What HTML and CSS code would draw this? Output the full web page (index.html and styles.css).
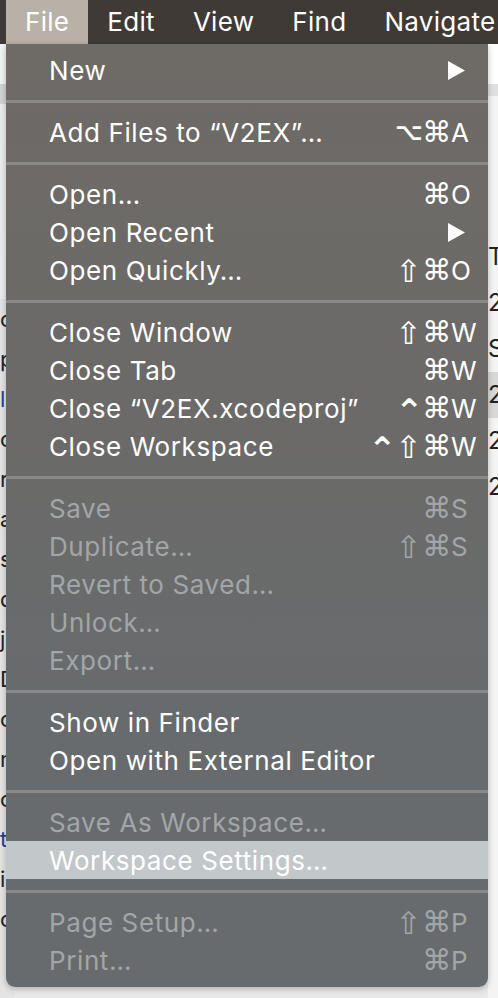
FILE: index.html
```html
<!DOCTYPE html>
<html>
<head>
<meta charset="utf-8">
<link rel="stylesheet" href="styles.css">
</head>
<body>
<div class="screen">
  <div class="menubar">
    <div class="mb-item active">File</div>
    <div class="mb-item">Edit</div>
    <div class="mb-item">View</div>
    <div class="mb-item">Find</div>
    <div class="mb-item">Navigate</div>
  </div>
  <div class="window">
    <div class="win-left">
      <div class="frag f-top"></div>
      <div class="frag">o</div><div class="frag">p</div><div class="frag blue">l</div><div class="frag">c</div>
      <div class="frag">r</div><div class="frag">a</div><div class="frag">s</div><div class="frag">d</div>
      <div class="frag">j</div><div class="frag">D</div><div class="frag">o</div><div class="frag">n</div>
      <div class="frag">c</div><div class="frag blue">t</div><div class="frag">i</div><div class="frag">o</div>
    </div>
    <div class="win-right">
      <div class="rfrag">T</div><div class="rfrag">2E</div><div class="rfrag">S</div>
      <div class="rfrag sel">2E</div><div class="rfrag">2E</div><div class="rfrag">2E</div>
    </div>
  </div>

  <div class="menu">
    <div class="row"><span class="label">New</span><span class="arrow"><svg width="17" height="19" viewBox="0 0 17 19"><polygon points="0,0 17,9.5 0,19" fill="#fff"/></svg></span></div>
    <div class="sep"></div>
    <div class="row"><span class="label">Add Files to “V2EX”…</span><span class="sc"><span class="mod opt">⌥</span><span class="mod">⌘</span><span class="key">A</span></span></div>
    <div class="sep"></div>
    <div class="row"><span class="label">Open…</span><span class="sc"><span class="mod">⌘</span><span class="key">O</span></span></div>
    <div class="row"><span class="label">Open Recent</span><span class="arrow"><svg width="17" height="19" viewBox="0 0 17 19"><polygon points="0,0 17,9.5 0,19" fill="#fff"/></svg></span></div>
    <div class="row"><span class="label">Open Quickly…</span><span class="sc"><span class="mod shift">⇧</span><span class="mod">⌘</span><span class="key">O</span></span></div>
    <div class="sep"></div>
    <div class="row"><span class="label">Close Window</span><span class="sc"><span class="mod shift">⇧</span><span class="mod">⌘</span><span class="key">W</span></span></div>
    <div class="row"><span class="label">Close Tab</span><span class="sc"><span class="mod">⌘</span><span class="key">W</span></span></div>
    <div class="row"><span class="label">Close “V2EX.xcodeproj”</span><span class="sc"><span class="mod ctl">⌃</span><span class="mod">⌘</span><span class="key">W</span></span></div>
    <div class="row"><span class="label">Close Workspace</span><span class="sc"><span class="mod ctl">⌃</span><span class="mod shift">⇧</span><span class="mod">⌘</span><span class="key">W</span></span></div>
    <div class="sep"></div>
    <div class="row dis"><span class="label">Save</span><span class="sc"><span class="mod">⌘</span><span class="key">S</span></span></div>
    <div class="row dis"><span class="label">Duplicate…</span><span class="sc"><span class="mod shift">⇧</span><span class="mod">⌘</span><span class="key">S</span></span></div>
    <div class="row dis"><span class="label">Revert to Saved…</span></div>
    <div class="row dis"><span class="label">Unlock…</span></div>
    <div class="row dis"><span class="label">Export…</span></div>
    <div class="sep"></div>
    <div class="row"><span class="label">Show in Finder</span></div>
    <div class="row"><span class="label">Open with External Editor</span></div>
    <div class="sep"></div>
    <div class="row dis"><span class="label">Save As Workspace…</span></div>
    <div class="row hl"><span class="label">Workspace Settings…</span></div>
    <div class="sep"></div>
    <div class="row dis"><span class="label">Page Setup…</span><span class="sc"><span class="mod shift">⇧</span><span class="mod">⌘</span><span class="key">P</span></span></div>
    <div class="row dis"><span class="label">Print…</span><span class="sc"><span class="mod">⌘</span><span class="key">P</span></span></div>
  </div>
</div>
</body>
</html>
```
FILE: styles.css
```css
* { box-sizing: border-box; }
html, body { margin: 0; padding: 0; }
body {
  width: 498px;
  height: 998px;
  overflow: hidden;
  background: #e9e9e9;
  font-family: Inter, "Liberation Sans", sans-serif;
}
.screen {
  position: relative;
  width: 498px;
  height: 998px;
}
.menubar {
  height: 44px;
  background: #3f3a35;
  display: flex;
  align-items: stretch;
  padding-left: 6px;
  color: #fff;
  font-size: 26px;
  letter-spacing: 0.3px;
  white-space: nowrap;
}
.mb-item {
  display: flex;
  align-items: center;
  padding: 0 19px 2px 19px;
}
.mb-item.active {
  background: #b8b1a7;
}
.window {
  display: flex;
  justify-content: space-between;
  height: 954px;
}
.win-left {
  width: 14px;
  background: #e4e4e4;
  overflow: hidden;
  display: flex;
  flex-direction: column;
  font-size: 22px;
  color: #222;
}
.frag {
  height: 40px;
  line-height: 40px;
}
.f-top {
  height: 255px;
  background: linear-gradient(#f2f2f2 0 40px, #d2d2d2 40px 60px, #ececec 60px);
}
.frag.blue { color: #1f3f8a; }
.win-right {
  width: 10px;
  background: linear-gradient(#ffffff 0 40px, #e0e0e0 40px 52px, #f4f4f4 52px);
  display: flex;
  flex-direction: column;
  padding-top: 190px;
  overflow: hidden;
  font-size: 24px;
  color: #222;
}
.rfrag {
  height: 46px;
  line-height: 46px;
  white-space: nowrap;
}
.rfrag.sel { background: #d8d8d8; }
.menu {
  position: absolute;
  top: 44px;
  left: 6px;
  width: 482px;
  height: 943px;
  padding: 7px 0 8px 0;
  border-radius: 0 0 9px 9px;
  background: linear-gradient(180deg, #6e6a66 0%, #6b6a68 40%, #686b6d 70%, #676b6e 100%);
  box-shadow: 0 2px 6px rgba(0,0,0,0.25);
  color: #fff;
  font-size: 26px;
  letter-spacing: 0.6px;
}
.row {
  height: 38px;
  display: flex;
  align-items: center;
  justify-content: space-between;
  padding: 0 17px 0 43px;
  white-space: nowrap;
}
.row.dis { color: #a2a6a8; }
.row.hl { background: #c2c7c9; color: #fff; }
.sep {
  height: 24px;
  display: flex;
  align-items: center;
}
.sep::before {
  content: "";
  display: block;
  width: 100%;
  height: 3px;
  background: #8b8987;
}
.arrow {
  display: flex;
  align-items: center;
  margin-right: 6px;
}
.sc {
  display: flex;
  align-items: center;
  letter-spacing: 0;
}
.mod {
  width: 27px;
  height: 38px;
  line-height: 38px;
  text-align: center;
  font-family: "DejaVu Sans", sans-serif;
  font-size: 29px;
  white-space: nowrap;
}
.mod.opt {
  font-size: 24px;
  font-weight: bold;
}
.mod.shift {
  font-size: 31px;
  line-height: 40px;
}
.mod.ctl {
  font-size: 34px;
  font-weight: bold;
  line-height: 44px;
}
.key {
  width: 20px;
  margin-left: 2px;
  text-align: left;
}
```
